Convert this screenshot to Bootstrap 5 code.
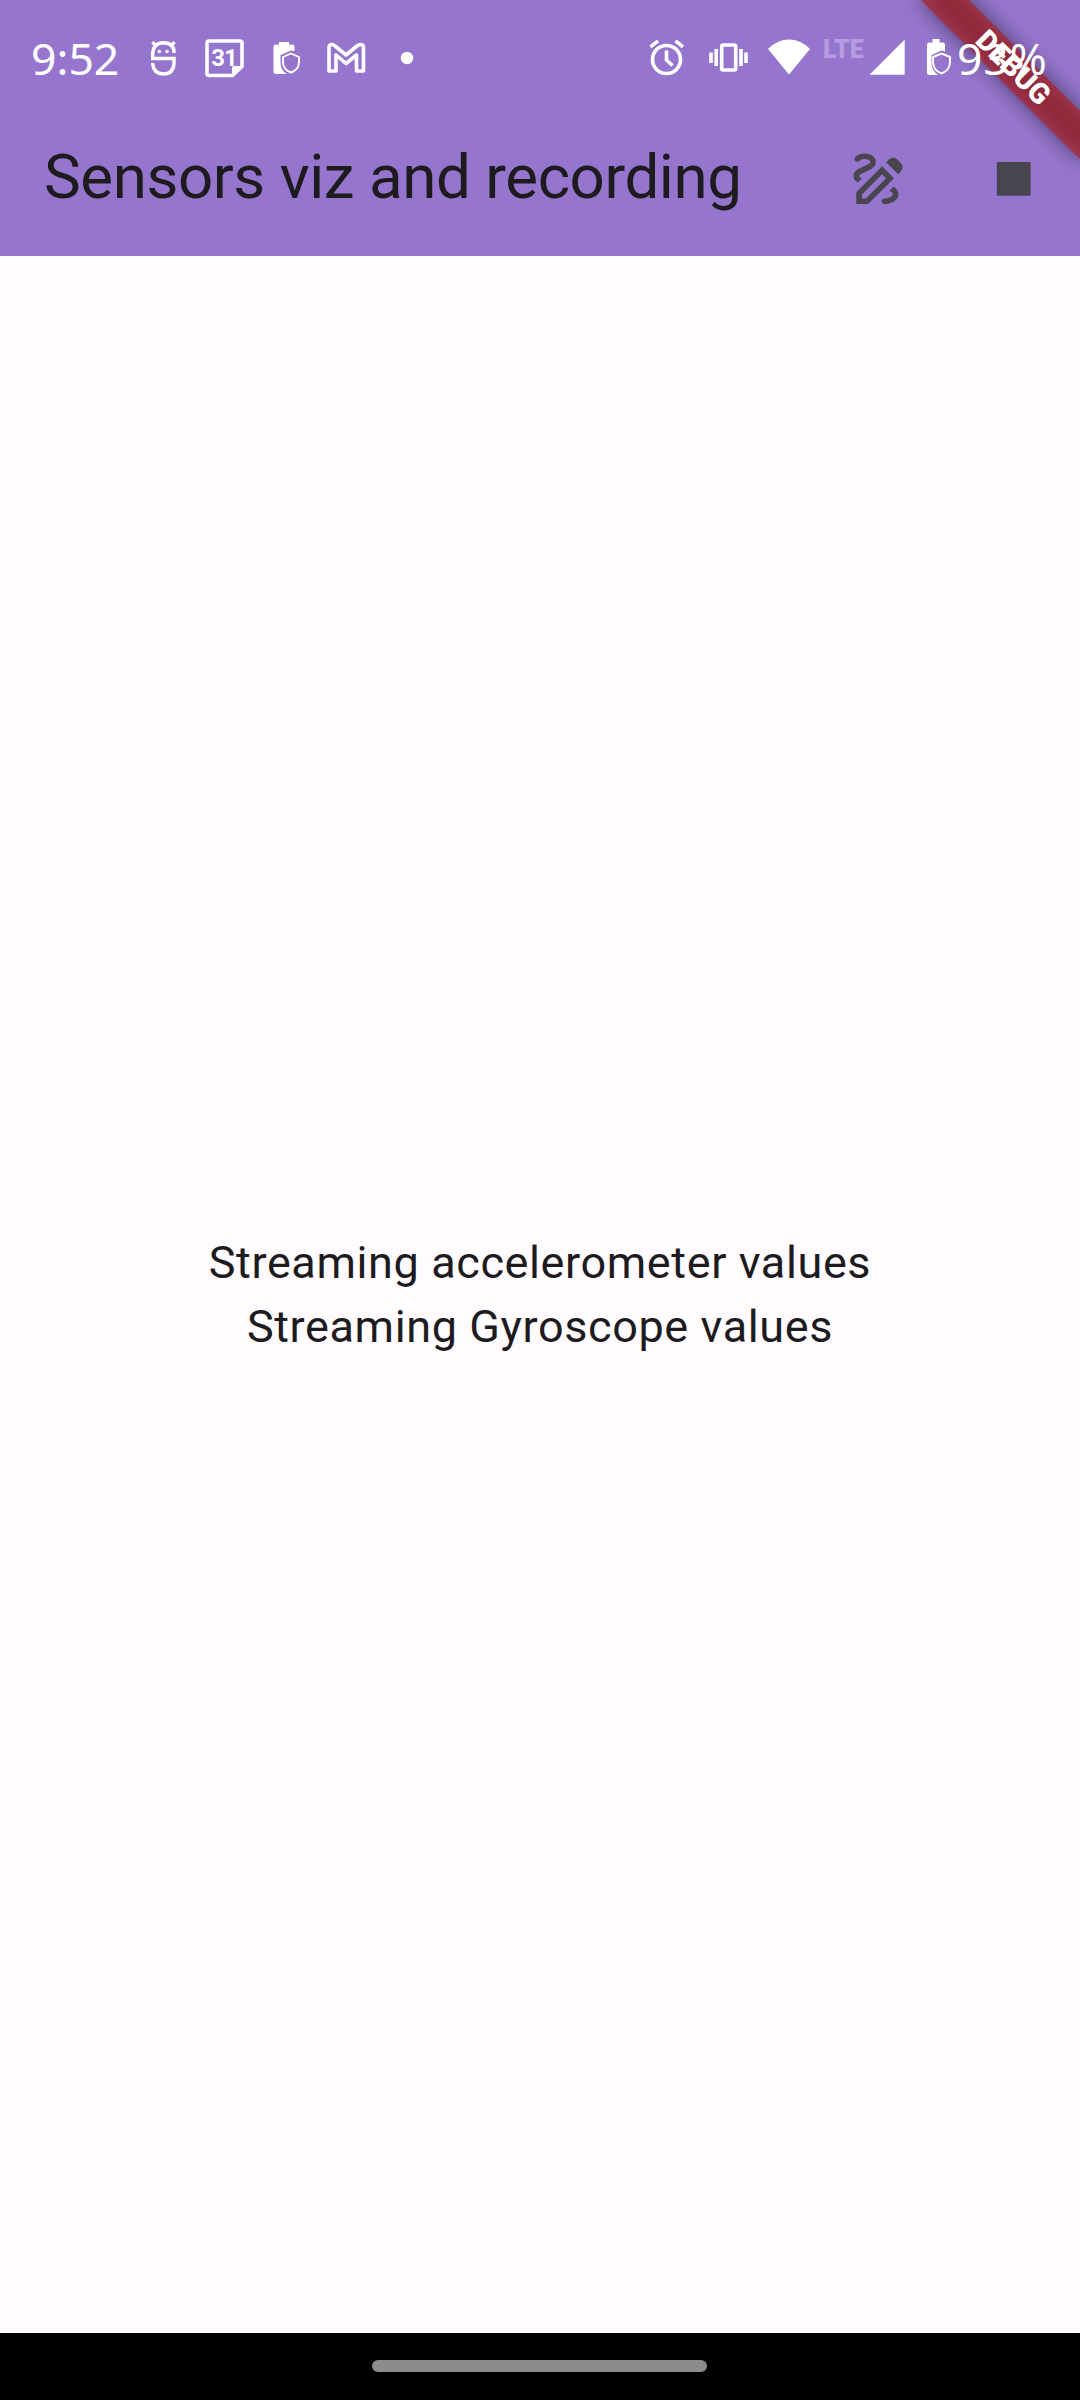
<!DOCTYPE html>
<html lang="en">
<head>
<meta charset="utf-8">
<meta name="viewport" content="width=device-width, initial-scale=1">
<title>Sensors viz and recording</title>
<link href="https://cdn.jsdelivr.net/npm/bootstrap@5.3.0/dist/css/bootstrap.min.css" rel="stylesheet">
<style>
  body { background: #fffbff; color: #1d1b1e; font-family: Roboto, sans-serif; }
  .screen { height: 2400px; }
  .app-header { height: 256px; background: #9575cd; }
  .status { height: 98px; padding: 0 34px 0 31px; font-family: "Noto Sans", sans-serif; z-index: 3; color: #fff; }
  .status svg { display: block; flex: none; }
  .clock { width: 119px; font-size: 44.5px; line-height: 60px; margin-top: 28px; }
  .lte { width: 46px; font: 900 25px/20px Roboto, sans-serif; color: #b59de0; margin-top: 40px; }
  .percent { width: 89px; font-size: 44.5px; line-height: 60px; margin-top: 28px; letter-spacing: .9px; }
  .toolbar { height: 158px; padding-left: 44px; }
  .app-title { font-size: 61.875px; line-height: 78px; font-weight: 400; letter-spacing: -.43px; }
  .tool { width: 135px; height: 135px; padding: 3px 0 0 2px; color: #49454e; }
  .readout { font-size: 45px; line-height: 64px; letter-spacing: .61px; }
  .ribbon-clip { width: 300px; height: 256px; z-index: 2; }
  .ribbon, .ribbon-shade { left: 187.5px; top: 78.75px; width: 225px; height: 33.75px; transform-origin: 112.5px -78.75px; transform: rotate(45deg); }
  .ribbon { background: rgba(183,28,28,.627); color: #fff; font-size: 28.7px; font-weight: 900; line-height: 33.75px; }
  .ribbon-shade { background: rgba(0,0,0,.5); filter: blur(10.2px); }
  .nav-strip { height: 67px; background: #000; }
  .nav-handle { width: 335px; height: 12px; background: #8c8c8c; margin-right: 1px; margin-top: -1px; }
</style>
<script src="https://cdn.jsdelivr.net/npm/bootstrap@5.3.0/dist/js/bootstrap.bundle.min.js"></script>
</head>
<body>
<div class="screen d-flex flex-column overflow-hidden">
  <header class="app-header position-relative">
    <div class="status position-relative d-flex align-items-start">
      <div class="clock">9:52</div>
      <svg width="55" height="98" viewBox="150 0 55 98" fill="none" stroke="#fff" stroke-width="3.400">
        <path d="M174 53V51Q173 42.700 163.300 42.700Q153 43 152.700 54V58.500H174V64Q173 74 163.300 74Q153.500 73.500 152.700 64V63M155.500 45.500L152.500 42M171.500 45.500L174.500 42"/>
        <circle cx="159.300" cy="51.500" r="1.800" fill="#fff" stroke="none"/><circle cx="167" cy="51.500" r="1.800" fill="#fff" stroke="none"/>
      </svg>
      <svg width="68" height="98" viewBox="205 0 68 98">
        <path d="M209 41H240Q242 41 242 43V66.500L232.500 75.500H209Q207 75.500 207 73.500V43Q207 41 209 41Z" fill="none" stroke="#fff" stroke-width="3.600"/>
        <path d="M242 66L232 76V67.500Q232 66 234 66Z" fill="#fff"/>
        <text x="224" y="66" text-anchor="middle" font-family="Roboto" font-weight="700" font-size="24" letter-spacing="-1" fill="#fff">31</text>
      </svg>
      <svg width="54" height="98" viewBox="273 0 54 98">
        <path d="M276 44.500H279V42H289V44.500H292Q294.500 44.500 294.500 47V51L291 50.500L280.500 55V63Q281 71 287 74H276Q273.500 74 273.500 71.500V47Q273.500 44.500 276 44.500Z" fill="#fff"/>
        <path d="M291 53.500L299 57V62.500Q298.500 70 291 72.500Q283.500 70 283 62.500V57Z" fill="none" stroke="#fff" stroke-width="1.900"/>
      </svg>
      <svg width="73" height="98" viewBox="327 0 73 98">
        <path d="M336 71H329V47.500Q329 44.500 332 44.500Q333.500 44.500 335 46L346 55L357 46Q359 44.500 360.500 44.500Q363.500 44.500 363.500 47.500V71H356.500V55L346 63.500L336 55Z" fill="none" stroke="#fff" stroke-width="3.600" stroke-linejoin="round"/>
      </svg>
      <svg width="20" height="98" viewBox="400 0 20 98"><circle cx="407" cy="58" r="6.200" fill="#fff"/></svg>
      <svg class="ms-auto" width="60" height="98" viewBox="649 0 60 98" fill="none" stroke="#fff" stroke-width="3.600">
        <circle cx="666.500" cy="59.500" r="14"/><path d="M666.500 50.500V60L672.500 65.500M650.500 46.800L658 40.800M683 46.800L675.500 40.800"/>
      </svg>
      <svg width="59" height="98" viewBox="709 0 59 98" fill="none" stroke="#fff" stroke-width="3.600">
        <rect x="721.700" y="45" width="14" height="25" rx="1.500"/><path d="M716.200 49V66M741 49V66M711 52.500V63M746 52.500V63"/>
      </svg>
      <svg width="55" height="98" viewBox="768 0 55 98"><path d="M768 49Q777 39.500 789 39.500Q801 39.500 810 49L789 74.500Z" fill="#fff"/></svg>
      <div class="lte">LTE</div>
      <svg width="58" height="98" viewBox="869 0 58 98"><path d="M869.500 74.700H904.700V39.500Z" fill="#fff"/></svg>
      <svg width="30" height="98" viewBox="927 0 30 98">
        <path d="M929.500 42.500H932.500V39H939.500V42.500H942.500Q945 42.500 945 45V51.500L941.500 50.500L931.500 55V63Q932 71 938 75H929.500Q927 75 927 72.500V45Q927 42.500 929.500 42.500Z" fill="#fff"/>
        <path d="M941.500 53.500L950 57V62.500Q949.500 70.500 941.500 73.500Q933.500 70.500 933 62.500V57Z" fill="none" stroke="#fff" stroke-width="1.900"/>
      </svg>
      <div class="percent">93%</div>
    </div>
    <div class="toolbar d-flex align-items-center">
      <h1 class="app-title mb-0 me-auto text-nowrap">Sensors viz and recording</h1>
      <div class="tool d-flex align-items-center justify-content-center">
        <svg width="67.500" height="67.500" viewBox="0 0 24 24" fill="currentColor"><path d="M18.850 10.390l1.060-1.060c.78-.78.78-2.050 0-2.830L18.500 5.090c-.78-.78-2.050-.78-2.830 0l-1.060 1.060 4.240 4.240zM14.610 11.810L7.410 19H6v-1.410l7.190-7.190 1.420 1.410zM13.190 7.560L4 16.760V21h4.240l9.190-9.190-4.240-4.250zM19 17.500c0 2.190-2.540 3.500-5 3.500-.55 0-1-.45-1-1s.45-1 1-1c1.540 0 3-.73 3-1.500 0-.47-.48-.87-1.230-1.200l1.480-1.480c1.070.63 1.750 1.470 1.750 2.680zM4.580 13.350C3.610 12.790 3 12.060 3 11c0-1.800 1.890-2.630 3.560-3.360C7.590 7.180 9 6.560 9 6c0-.41-.78-1-2-1-1.260 0-1.800.61-1.830.64-.35.41-.98.46-1.400.12-.41-.34-.49-.95-.15-1.380C3.730 4.240 4.760 3 7 3s4 1.320 4 3c0 1.870-1.930 2.720-3.640 3.470C6.420 9.880 5 10.500 5 11c0 .31.430.600 1.070.860l-1.490 1.490z"/></svg>
      </div>
      <div class="tool d-flex align-items-center justify-content-center">
        <svg width="67.500" height="67.500" viewBox="0 0 24 24" fill="currentColor"><path d="M6 6h12v12H6z"/></svg>
      </div>
    </div>
    <div class="ribbon-clip position-absolute top-0 end-0 overflow-hidden">
      <div class="ribbon-shade position-absolute"></div>
      <div class="ribbon position-absolute text-center">DEBUG</div>
    </div>
  </header>
  <main class="flex-grow-1 d-flex flex-column align-items-center justify-content-center">
    <div class="readout">Streaming accelerometer values</div>
    <div class="readout">Streaming Gyroscope values</div>
  </main>
  <footer class="nav-strip d-flex align-items-center justify-content-center"><div class="nav-handle rounded-pill"></div></footer>
</div>
</body>
</html>
